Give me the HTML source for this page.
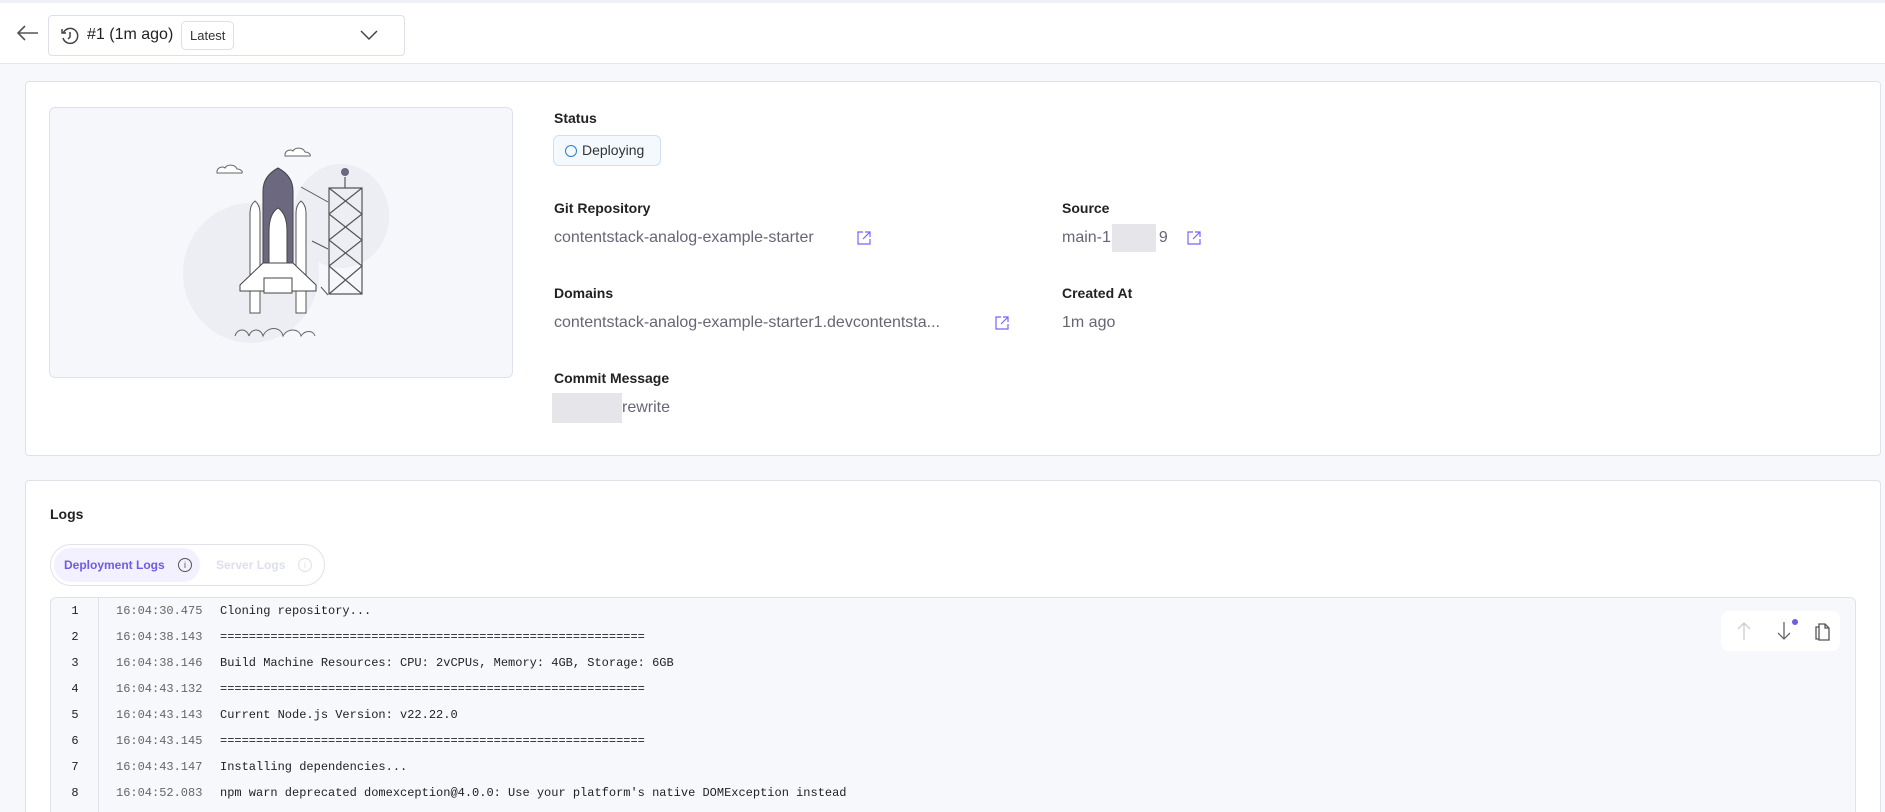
<!DOCTYPE html>
<html><head><meta charset="utf-8"><style>
*{box-sizing:border-box;margin:0;padding:0}
html,body{width:1885px;height:812px;overflow:hidden}
body{background:#f7f8fc;font-family:"Liberation Sans",sans-serif;color:#222;position:relative}
#wrap{position:absolute;left:0;top:0;width:1885px;height:812px;overflow:hidden}
.top{position:absolute;left:0;top:0;width:1885px;height:64px;background:#fff;border-top:3px solid #eef0f8;border-bottom:1px solid #e6e8f0}
.dd{position:absolute;left:48px;top:12px;width:357px;height:41px;border:1px solid #dde0ea;border-radius:4px;background:#fff}
.card{position:absolute;background:#fff;border:1px solid #dfe2ea;border-radius:4px}
.lbl{position:absolute;font-size:14px;font-weight:bold;color:#222;line-height:16px}
.val{position:absolute;font-size:16px;color:#666677;line-height:20px}
.ext{position:absolute;width:16px;height:16px}
.mono{font-family:"Liberation Mono",monospace;font-size:12px}
.row{position:absolute;left:0;height:26px;line-height:26px}
.row .n{position:absolute;left:0;width:48px;text-align:center;color:#222}
.row .t{position:absolute;left:65px;color:#666}
.row .m{position:absolute;left:169px;color:#222;white-space:pre}
</style></head><body><div id="wrap">
<div class="top">
<svg style="position:absolute;left:17px;top:22px" width="22" height="16" viewBox="0 0 22 16"><path d="M21 8H2M8 1L1 8l7 7" fill="none" stroke="#555" stroke-width="1.6"/></svg>
<div class="dd">
<svg style="position:absolute;left:11px;top:10px" width="20" height="20" viewBox="0 0 20 20"><path d="M3.5 6.5A7.5 7.5 0 1 1 3 12" fill="none" stroke="#444" stroke-width="1.5"/><path d="M2 3v4h4" fill="none" stroke="#444" stroke-width="1.5"/><path d="M10 6v5l-2 2" fill="none" stroke="#444" stroke-width="1.5"/></svg>
<span style="position:absolute;left:38px;top:10px;font-size:16px;color:#222">#1 (1m ago)</span>
<span style="position:absolute;left:132px;top:5px;height:29px;line-height:27px;padding:0 8px;border:1px solid #dde0ea;border-radius:5px;font-size:13px;color:#333">Latest</span>
<svg style="position:absolute;left:311px;top:14px" width="18" height="11" viewBox="0 0 18 11"><path d="M1 1l8 8 8-8" fill="none" stroke="#444" stroke-width="1.5"/></svg>
</div>
</div>

<div class="card" style="left:25px;top:81px;width:1856px;height:375px">
<div style="position:absolute;left:23px;top:25px;width:464px;height:271px;background:#f6f7fb;border:1px solid #dfe2ea;border-radius:6px">
<svg width="464" height="271" viewBox="49 107 464 271" style="position:absolute;left:0;top:0">
<ellipse cx="250" cy="272" rx="68" ry="70" fill="#eceef4"/>
<ellipse cx="340" cy="215" rx="48" ry="52" fill="#eceef4"/>
<path d="M216 170c1-4 6-5 8-3 2-4 10-4 12 1 4 0 6 3 5 4h-25z" fill="#fff" stroke="#666" stroke-width="1"/>
<path d="M284 153c1-4 6-5 8-3 2-4 10-4 12 1 4 0 6 3 5 4h-25z" fill="#fff" stroke="#666" stroke-width="1"/>
<path d="M262 273v-83q0-15 15-23q15 8 15 23v83z" fill="#6b6880" stroke="#444" stroke-width="1"/>
<path d="M268 285v-55q0-17 9-23q9 6 9 23v55z" fill="#fff" stroke="#444" stroke-width="1"/>
<path d="M249 312v-100q0-8 5-12q5 4 5 12v100z" fill="#fff" stroke="#555" stroke-width="1"/>
<path d="M295 312v-100q0-8 5-12q5 4 5 12v100z" fill="#fff" stroke="#555" stroke-width="1"/>
<path d="M262 262l-23 22v6h76v-6l-23-22z" fill="#fff" stroke="#444" stroke-width="1"/>
<path d="M263 277h28v15h-28z" fill="#fff" stroke="#444" stroke-width="1"/>
<path d="M328 293h33v-106h-33zM328 187l33 26M361 187l-33 26M328 213l33 26M361 213l-33 26M328 239l33 26M361 239l-33 26M328 265l33 28M361 265l-33 28M344 187v-11" fill="none" stroke="#555" stroke-width="1.2"/>
<circle cx="344" cy="171" r="4" fill="#6b6880"/>
<path d="M300 186l27 15M311 240l16 8M320 286l7 8" stroke="#555" stroke-width="1"/>
<path d="M234 335c2-8 12-8 14 0 2-8 12-8 14 0 4-10 18-10 20 0 4-8 16-8 18 0 4-6 12-6 14 0" fill="none" stroke="#666" stroke-width="1"/>
</svg>
</div>
<div class="lbl" style="left:528px;top:28px">Status</div>
<div style="position:absolute;left:527px;top:53px;width:108px;height:31px;border:1px solid #cfe0ef;background:#f3f9fd;border-radius:6px;font-size:14px;color:#333;line-height:29px;padding-left:28px">Deploying<span style="position:absolute;left:11px;top:9px;width:12px;height:12px;border:1.5px solid #2f7fd0;border-radius:50%"></span></div>
<div class="lbl" style="left:528px;top:118px">Git Repository</div>
<div class="val" style="left:528px;top:146px">contentstack-analog-example-starter</div>
<div class="lbl" style="left:1036px;top:118px">Source</div>
<div class="val" style="left:1036px;top:146px">main-1<span style="display:inline-block;width:48px"></span>9</div>
<div style="position:absolute;left:1086px;top:142px;width:44px;height:28px;background:#e6e6ea"></div>
<div class="lbl" style="left:528px;top:203px">Domains</div>
<div class="val" style="left:528px;top:231px">contentstack-analog-example-starter1.devcontentsta...</div>
<div class="lbl" style="left:1036px;top:203px">Created At</div>
<div class="val" style="left:1036px;top:231px">1m ago</div>
<div class="lbl" style="left:528px;top:288px">Commit Message</div>
<div style="position:absolute;left:526px;top:311px;width:70px;height:30px;background:#e6e6ea"></div>
<div class="val" style="left:596px;top:316px">rewrite</div>
<svg class="ext" style="left:830px;top:148px" viewBox="0 0 16 16"><path d="M7 2H2v12h12V9M9 2h5v5M14 2L7 9" fill="none" stroke="#7b61ff" stroke-width="1.2"/></svg>
<svg class="ext" style="left:1160px;top:148px" viewBox="0 0 16 16"><path d="M7 2H2v12h12V9M9 2h5v5M14 2L7 9" fill="none" stroke="#7b61ff" stroke-width="1.2"/></svg>
<svg class="ext" style="left:968px;top:233px" viewBox="0 0 16 16"><path d="M7 2H2v12h12V9M9 2h5v5M14 2L7 9" fill="none" stroke="#7b61ff" stroke-width="1.2"/></svg>
</div>

<div class="card" style="left:25px;top:480px;width:1856px;height:345px;overflow:hidden">
<div class="lbl" style="left:24px;top:25px">Logs</div>
<div style="position:absolute;left:24px;top:63px;width:275px;height:42px;border:1px solid #dfe2ea;border-radius:21px">
<div style="position:absolute;left:3px;top:3px;width:146px;height:34px;background:#f3f1ff;border-radius:17px"></div>
<span style="position:absolute;left:13px;top:13px;font-size:12px;font-weight:bold;color:#6c5ce7">Deployment Logs</span>
<span style="position:absolute;left:127px;top:13px;width:14px;height:14px;border:1px solid #555;border-radius:50%;font-size:9px;text-align:center;line-height:12px;color:#555">i</span>
<span style="position:absolute;left:165px;top:13px;font-size:12px;font-weight:bold;color:#dde0ea">Server Logs</span>
<span style="position:absolute;left:247px;top:13px;width:14px;height:14px;border:1px solid #dde0ea;border-radius:50%;font-size:9px;text-align:center;line-height:12px;color:#dde0ea">i</span>
</div>
<div class="mono" style="position:absolute;left:24px;top:116px;width:1806px;height:260px;background:#f7f8fc;border:1px solid #dfe2ea;border-radius:6px">
<div style="position:absolute;left:47px;top:0;bottom:0;border-left:1px solid #dfe2ea"></div>
<div class="row" style="top:0px"><span class="n">1</span><span class="t">16:04:30.475</span><span class="m">Cloning repository...</span></div>
<div class="row" style="top:26px"><span class="n">2</span><span class="t">16:04:38.143</span><span class="m">===========================================================</span></div>
<div class="row" style="top:52px"><span class="n">3</span><span class="t">16:04:38.146</span><span class="m">Build Machine Resources: CPU: 2vCPUs, Memory: 4GB, Storage: 6GB</span></div>
<div class="row" style="top:78px"><span class="n">4</span><span class="t">16:04:43.132</span><span class="m">===========================================================</span></div>
<div class="row" style="top:104px"><span class="n">5</span><span class="t">16:04:43.143</span><span class="m">Current Node.js Version: v22.22.0</span></div>
<div class="row" style="top:130px"><span class="n">6</span><span class="t">16:04:43.145</span><span class="m">===========================================================</span></div>
<div class="row" style="top:156px"><span class="n">7</span><span class="t">16:04:43.147</span><span class="m">Installing dependencies...</span></div>
<div class="row" style="top:182px"><span class="n">8</span><span class="t">16:04:52.083</span><span class="m">npm warn deprecated domexception@4.0.0: Use your platform's native DOMException instead</span></div>
<div style="position:absolute;left:1670px;top:13px;width:119px;height:40px;background:#fff;border-radius:8px">
<svg style="position:absolute;left:15px;top:10px" width="16" height="20" viewBox="0 0 16 20"><path d="M8 19V2M2 8l6-6 6 6" fill="none" stroke="#ccc" stroke-width="1.3"/></svg>
<svg style="position:absolute;left:55px;top:10px" width="16" height="20" viewBox="0 0 16 20"><path d="M8 1v17M2 12l6 6 6-6" fill="none" stroke="#666" stroke-width="1.3"/></svg>
<span style="position:absolute;left:71px;top:8px;width:6px;height:6px;border-radius:50%;background:#6c5ce7"></span>
<svg style="position:absolute;left:94px;top:10px" width="16" height="20" viewBox="0 0 16 20"><path d="M4 3h6l4 4v12H4z M10 3v4h4 M4 6H1v12h3" fill="none" stroke="#555" stroke-width="1.3"/></svg>
</div>
</div>
</div>
</div></body></html>
